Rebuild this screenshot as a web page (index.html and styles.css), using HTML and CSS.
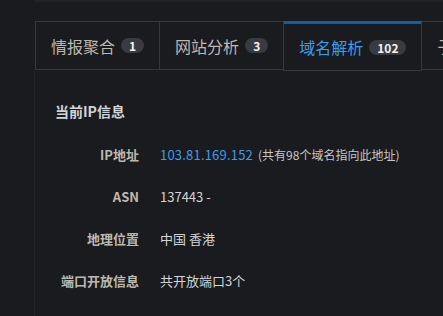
FILE: index.html
```html
<!DOCTYPE html>
<html lang="zh-CN">
<head>
    <meta charset="UTF-8">
    <meta name="viewport" content="width=device-width, initial-scale=1.0">
    <title>域名解析</title>
    <link rel="stylesheet" href="styles.css">
</head>
<body>
    <div class="page">
        <div class="top-strip"></div>

        <div class="tabs">
            <div class="tab">情报聚合 <span class="badge">1</span></div>
            <div class="tab">网站分析 <span class="badge">3</span></div>
            <div class="tab active">域名解析 <span class="badge">102</span></div>
            <div class="tab">子域名 <span class="badge">0</span></div>
        </div>

        <div class="panel">
            <h3 class="panel-title">当前IP信息</h3>
            <div class="info">
                <div class="label">IP地址</div>
                <div class="value"><a class="link" href="#">103.81.169.152</a><span class="note">(共有98个域名指向此地址)</span></div>

                <div class="label">ASN</div>
                <div class="value">137443 -</div>

                <div class="label">地理位置</div>
                <div class="value">中国 香港</div>

                <div class="label">端口开放信息</div>
                <div class="value">共开放端口3个</div>
            </div>
        </div>
    </div>
</body>
</html>
```

FILE: styles.css
```css
body {
    margin: 0;
    background-color: #1a1b1e;
    font-family: "Noto Sans CJK SC", "Noto Sans", sans-serif;
    overflow: hidden;
}
.page {
    padding-left: 34px;
    height: 316px;
    overflow: hidden;
}
.top-strip {
    height: 2px;
    margin-left: 1px;
    background-color: #222327;
}
.tabs {
    display: flex;
    align-items: flex-start;
    margin-top: 19px;
    margin-left: 1px;
    white-space: nowrap;
}
.tab {
    display: flex;
    align-items: center;
    gap: 6px;
    box-sizing: border-box;
    height: 49px;
    padding: 0 15px;
    border: 1px solid #35383d;
    border-right: none;
    color: #bcb8b0;
    font-size: 16px;
    flex-shrink: 0;
}
.tab.active {
    height: 50px;
    border-top: 3px solid #0f60a2;
    border-right: 1px solid #35383d;
    color: #3a9bef;
}
.tab.active + .tab {
    border-left: none;
}
.badge {
    display: inline-block;
    height: 15px;
    line-height: 15px;
    padding: 0 8px;
    border-radius: 8px;
    background-color: #393b40;
    color: #f2f2f2;
    font-size: 12px;
    font-weight: bold;
}
.panel {
    height: 260px;
    margin-top: -1px;
    border-left: 1px solid #222428;
    padding: 31px 0 0 20px;
}
.panel-title {
    margin: 0;
    font-size: 14px;
    line-height: 20px;
    font-weight: bold;
    color: #d0d4d9;
}
.info {
    display: grid;
    grid-template-columns: 84px auto;
    grid-auto-rows: 42px;
    column-gap: 21px;
    align-items: center;
    margin-top: 12px;
    font-size: 13px;
}
.label {
    text-align: right;
    font-weight: bold;
    color: #bdb9b1;
}
.value {
    color: #d2d4d7;
}
.link {
    color: #3d9cec;
    text-decoration: none;
    letter-spacing: 0.2px;
}
.note {
    margin-left: 5px;
    font-size: 12px;
    color: #c6c6c6;
}
```
